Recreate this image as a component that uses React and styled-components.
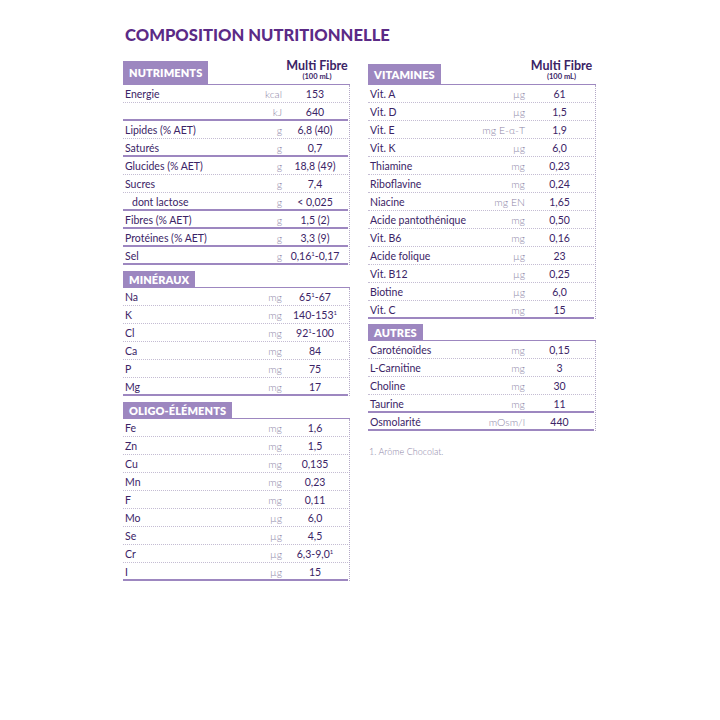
import React from 'react';
import styled, { createGlobalStyle } from 'styled-components';

const GlobalStyle = createGlobalStyle`
  body {
    margin: 0;
    background: #ffffff;
    font-family: 'Lato', 'Liberation Sans', sans-serif;
  }
`;

const Page = styled.div`
  width: 720px;
  height: 720px;
  padding: 25px 0 0 123px;
  box-sizing: border-box;
`;

const Title = styled.h1`
  margin: 0 0 0 2px;
  font-family: 'Lato', sans-serif;
  font-weight: 900;
  font-size: 16.6px;
  line-height: 20px;
  color: #5b2a86;
`;

const Columns = styled.div`
  display: grid;
  grid-template-columns: 227px 228px;
  column-gap: 18px;
  align-items: start;
  margin-top: ${props => props.$top || 14}px;
`;

const Column = styled.div`
  display: flex;
  flex-direction: column;
  gap: ${props => props.$gap}px;
`;

const SectionHead = styled.div`
  display: flex;
  align-items: flex-end;
  justify-content: space-between;
  border-bottom: 1px solid #9d87c0;
`;

const Tab = styled.div`
  height: ${props => props.$h}px;
  display: flex;
  align-items: center;
  padding: 0 6px;
  background: #9d87c0;
  color: #ffffff;
  font-weight: 800;
  font-size: 11px;
  letter-spacing: 0.1px;
`;

const ColHeading = styled.div`
  display: flex;
  flex-direction: column;
  align-items: center;
  color: #3b2466;
  padding-bottom: 3px;
`;

const HeadingMain = styled.span`
  font-weight: 700;
  font-size: 12.5px;
  line-height: 12px;
`;

const HeadingSub = styled.span`
  font-weight: 700;
  font-size: 7.5px;
  line-height: 9px;
`;

const Body = styled.div`
  border-right: 1px dotted #b3a8c6;
  padding-right: 1px;
`;

const Row = styled.div`
  display: grid;
  grid-template-columns: 1fr auto ${props => props.$valw}px;
  align-items: center;
  height: 18px;
  box-sizing: border-box;
  border-bottom: ${props => (props.$strong ? '2px solid #9d87c0' : '1px dotted #c4bcd3')};
  padding-left: 2px;
  padding-top: ${props => (props.$strong ? 2 : 1)}px;
  font-size: 10.5px;
  color: #3b2466;
`;

const Label = styled.span`
  font-weight: 400;
  white-space: nowrap;
  padding-left: ${props => (props.$indent ? 7 : 0)}px;
`;

const Unit = styled.span`
  font-weight: 300;
  color: #8c84a6;
  text-align: right;
`;

const Value = styled.span`
  font-weight: 400;
  text-align: center;

  sup {
    font-size: 6px;
    line-height: 0;
    vertical-align: 4px;
  }
`;

const Note = styled.div`
  margin-top: 15px;
  padding-left: 1px;
  font-size: 9px;
  font-weight: 300;
  color: #8c84a6;
`;

const sup = (a, b) => (
  <>
    {a}
    <sup>1</sup>
    {b}
  </>
);

// [label, unit, value, strong bottom line, indented]
const nutriments = [
  ['Energie', 'kcal', '153'],
  ['', 'kJ', '640', true],
  ['Lipides (% AET)', 'g', '6,8 (40)'],
  ['Saturés', 'g', '0,7', true],
  ['Glucides (% AET)', 'g', '18,8 (49)'],
  ['Sucres', 'g', '7,4'],
  ['dont lactose', 'g', '< 0,025', true, true],
  ['Fibres (% AET)', 'g', '1,5 (2)', true],
  ['Protéines (% AET)', 'g', '3,3 (9)', true],
  ['Sel', 'g', sup('0,16', '-0,17'), true],
];

const mineraux = [
  ['Na', 'mg', sup('65', '-67')],
  ['K', 'mg', sup('140-153', '')],
  ['Cl', 'mg', sup('92', '-100')],
  ['Ca', 'mg', '84'],
  ['P', 'mg', '75'],
  ['Mg', 'mg', '17', true],
];

const oligo = [
  ['Fe', 'mg', '1,6'],
  ['Zn', 'mg', '1,5'],
  ['Cu', 'mg', '0,135'],
  ['Mn', 'mg', '0,23'],
  ['F', 'mg', '0,11'],
  ['Mo', 'µg', '6,0'],
  ['Se', 'µg', '4,5'],
  ['Cr', 'µg', sup('6,3-9,0', '')],
  ['I', 'µg', '15', true],
];

const vitamines = [
  ['Vit. A', 'µg', '61'],
  ['Vit. D', 'µg', '1,5'],
  ['Vit. E', 'mg E-α-T', '1,9'],
  ['Vit. K', 'µg', '6,0'],
  ['Thiamine', 'mg', '0,23'],
  ['Riboflavine', 'mg', '0,24'],
  ['Niacine', 'mg EN', '1,65'],
  ['Acide pantothénique', 'mg', '0,50'],
  ['Vit. B6', 'mg', '0,16'],
  ['Acide folique', 'µg', '23'],
  ['Vit. B12', 'µg', '0,25'],
  ['Biotine', 'µg', '6,0'],
  ['Vit. C', 'mg', '15', true],
];

const autres = [
  ['Caroténoïdes', 'mg', '0,15'],
  ['L-Carnitine', 'mg', '3'],
  ['Choline', 'mg', '30'],
  ['Taurine', 'mg', '11', true],
  ['Osmolarité', 'mOsm/l', '440', true],
];

function Section({ title, tabHeight, rows, heading, valw }) {
  return (
    <div>
      <SectionHead>
        <Tab $h={tabHeight}>{title}</Tab>
        {heading && (
          <ColHeading style={{ width: valw }}>
            <HeadingMain>Multi Fibre</HeadingMain>
            <HeadingSub>(100 mL)</HeadingSub>
          </ColHeading>
        )}
      </SectionHead>
      <Body>
        {rows.map(([label, unit, value, strong, indent], i) => (
          <Row key={i} $strong={strong} $valw={valw}>
            <Label $indent={indent}>{label}</Label>
            <Unit>{unit}</Unit>
            <Value>{value}</Value>
          </Row>
        ))}
      </Body>
    </div>
  );
}

export default function App() {
  return (
    <Page>
      <GlobalStyle />
      <Title>COMPOSITION NUTRITIONNELLE</Title>
      <Columns $top={15}>
        <Column $gap={6}>
          <Section title="NUTRIMENTS" tabHeight={23} rows={nutriments} heading valw={66} />
          <Section title="MINÉRAUX" tabHeight={16} rows={mineraux} valw={66} />
          <Section title="OLIGO-ÉLÉMENTS" tabHeight={16} rows={oligo} valw={66} />
        </Column>
        <Column $gap={5}>
          <Section title="VITAMINES" tabHeight={20} rows={vitamines} heading valw={69} />
          <div>
            <Section title="AUTRES" tabHeight={16} rows={autres} valw={69} />
            <Note>1. Arôme Chocolat.</Note>
          </div>
        </Column>
      </Columns>
    </Page>
  );
}
